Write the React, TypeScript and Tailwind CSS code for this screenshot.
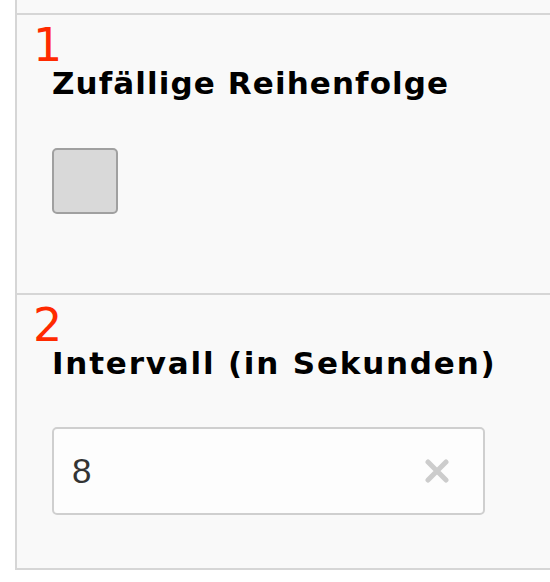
import React from "react";

export default function App() {
  return (
    <div className="w-[550px] h-[582px] bg-white overflow-hidden">
      <div className="ml-[15px] w-[560px] h-[570px] bg-[#f9f9f9] border-l-2 border-b-2 border-[#d6d6d6] flex flex-col">
        <div className="h-[15px] border-b-2 border-[#d6d6d6]" />
        <section className="h-[280px] border-b-2 border-[#d6d6d6] pl-[16px] pt-[5px]">
          <div className="text-[#ff2a00] text-[46px] leading-[50px] font-['DejaVu_Sans',sans-serif]">1</div>
          <div className="mt-[-7px] pl-[19px] text-[31px] leading-[40px] tracking-[1.1px] font-bold text-black font-['DejaVu_Sans',sans-serif]">
            Zufällige Reihenfolge
          </div>
          <div className="pl-[19px] pt-[45px]">
            <div className="w-[66px] h-[66px] rounded-[5px] border-2 border-[#a0a0a0] bg-[#d9d9d9]" />
          </div>
        </section>
        <section className="flex-1 pl-[16px] pt-[5px]">
          <div className="text-[#ff2a00] text-[46px] leading-[50px] font-['DejaVu_Sans',sans-serif]">2</div>
          <div className="mt-[-7px] pl-[19px] text-[31px] leading-[40px] tracking-[1.8px] font-bold text-black font-['DejaVu_Sans',sans-serif]">
            Intervall (in Sekunden)
          </div>
          <div className="pl-[19px] pt-[44px]">
            <div className="w-[433px] h-[88px] rounded-[5px] border-2 border-[#cfcfcf] bg-[#fdfdfd] flex items-center pl-[18px] pr-[34px]">
              <span className="flex-1 text-[35px] text-[#333] font-['Liberation_Sans',sans-serif]">8</span>
              <svg width="24" height="24" viewBox="0 0 24 24">
                <path d="M3 3 L21 21 M21 3 L3 21" stroke="#cccccc" strokeWidth="5" strokeLinecap="round" />
              </svg>
            </div>
          </div>
        </section>
      </div>
    </div>
  );
}
